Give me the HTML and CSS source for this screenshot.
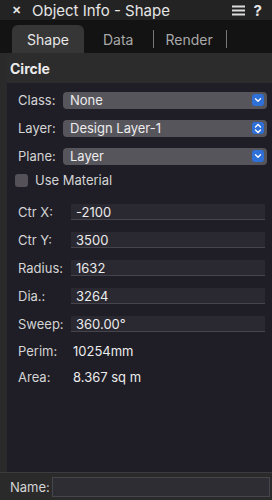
FILE: index.html
```html
<!DOCTYPE html>
<html lang="en">
<head>
<meta charset="UTF-8">
<meta name="viewport" content="width=device-width, initial-scale=1.0">
<title>Object Info - Shape</title>
<link rel="stylesheet" href="styles.css">
</head>
<body>

<div class="palette">
  <div class="titlebar">
    <span class="close">&#x2715;</span>
    <span class="title">Object Info - Shape</span>
    <span class="tools">
      <svg class="menu-icon" width="13" height="11" viewBox="0 0 13 11"><rect x="0" y="0.5" width="13" height="2" fill="#ddd"/><rect x="0" y="4.5" width="13" height="2" fill="#ddd"/><rect x="0" y="8.5" width="13" height="2" fill="#ddd"/></svg>
      <span class="help">?</span>
    </span>
  </div>

  <div class="tabs">
    <div class="tab active">Shape</div>
    <div class="tab data">Data</div>
    <div class="sep"></div>
    <div class="tab render">Render</div>
    <div class="sep"></div>
  </div>

  <div class="body">
    <div class="gutter"></div>
    <div class="content">
      <div class="heading">Circle</div>
      <div class="props">
        <div class="row">
          <label>Class:</label>
          <div class="popup"><span>None</span><span class="arrow">
            <svg width="8" height="6" viewBox="0 0 8 6"><path d="M1.5 1.8 L4 4.2 L6.5 1.8" stroke="#fff" stroke-width="1.4" fill="none" stroke-linecap="round" stroke-linejoin="round"/></svg>
          </span></div>
        </div>
        <div class="row">
          <label>Layer:</label>
          <div class="popup"><span>Design Layer-1</span><span class="arrow">
            <svg width="8" height="11" viewBox="0 0 8 11"><path d="M1.5 4 L4 1.6 L6.5 4 M1.5 7 L4 9.4 L6.5 7" stroke="#fff" stroke-width="1.4" fill="none" stroke-linecap="round" stroke-linejoin="round"/></svg>
          </span></div>
        </div>
        <div class="row">
          <label>Plane:</label>
          <div class="popup"><span>Layer</span><span class="arrow">
            <svg width="8" height="6" viewBox="0 0 8 6"><path d="M1.5 1.8 L4 4.2 L6.5 1.8" stroke="#fff" stroke-width="1.4" fill="none" stroke-linecap="round" stroke-linejoin="round"/></svg>
          </span></div>
        </div>
        <div class="check-row">
          <span class="checkbox"></span>
          <span>Use Material</span>
        </div>

        <div class="fields">
          <div class="row field-row"><label>Ctr X:</label><div class="field">-2100</div></div>
          <div class="row field-row"><label>Ctr Y:</label><div class="field">3500</div></div>
          <div class="row field-row"><label>Radius:</label><div class="field">1632</div></div>
          <div class="row field-row"><label>Dia.:</label><div class="field">3264</div></div>
          <div class="row field-row"><label>Sweep:</label><div class="field">360.00°</div></div>
          <div class="row info-row"><label>Perim:</label><div class="value">10254mm</div></div>
          <div class="row info-row"><label>Area:</label><div class="value">8.367 sq m</div></div>
        </div>
      </div>
    </div>
  </div>

  <div class="footer">
    <label>Name:</label>
    <div class="name-field"></div>
  </div>
</div>

</body>
</html>
```

FILE: styles.css
```css
/* Object Info palette */

body {
  margin: 0;
  background: #1f1e26;
  font-family: Inter, "Liberation Sans", sans-serif;
  color: #e4e4e4;
}

.palette {
  width: 272px;
  height: 500px;
  display: flex;
  flex-direction: column;
  overflow: hidden;
}

.titlebar {
  height: 20px;
  background: #232323;
  display: flex;
  align-items: center;
  padding: 0 10px 0 12px;
  font-size: 15px;
  color: #e6e6e6;
}

.close {
  font-size: 11px;
  font-weight: bold;
  width: 20px;
}

.title {
  flex: 1;
}

.tools {
  display: flex;
  align-items: center;
  gap: 9px;
}

.help {
  font-weight: bold;
  font-size: 15px;
}

.tabs {
  height: 33px;
  background: #131313;
  display: flex;
  align-items: flex-end;
  padding-left: 12px;
  font-size: 14px;
}

.tab {
  height: 28px;
  display: flex;
  align-items: center;
  color: #a8a8a8;
}

.tab.active {
  width: 72px;
  justify-content: center;
  background: #363636;
  border-radius: 6px 6px 0 0;
  color: #e8e8e8;
}

.tab.data {
  padding: 0 20px 0 19px;
}

.tab.render {
  padding: 0 13px 0 11px;
}

.sep {
  width: 1px;
  height: 18px;
  background: #777;
  margin-bottom: 5px;
}

.body {
  flex: 1;
  display: flex;
}

.gutter {
  width: 7px;
  background: #2a2a2a;
}

.content {
  flex: 1;
  display: flex;
  flex-direction: column;
}

.heading {
  height: 30px;
  background: #2c2c2c;
  display: flex;
  align-items: center;
  padding-left: 3px;
  font-weight: bold;
  font-size: 14px;
  color: #ececec;
}

.props {
  flex: 1;
  background: #1f1e26;
  padding: 3px 5px 0 11px;
  font-size: 13px;
}

.row {
  height: 28px;
  display: flex;
  align-items: center;
}

.row label {
  width: 45px;
  color: #d4d4d4;
}

.popup {
  flex: 1;
  height: 17px;
  background: #57555c;
  border-radius: 4px;
  display: flex;
  align-items: center;
  justify-content: space-between;
  padding: 0 3px 0 7px;
  color: #ececec;
}

.arrow {
  width: 12px;
  height: 12px;
  background: #2f6fd8;
  border-radius: 3px;
  display: flex;
  align-items: center;
  justify-content: center;
}

.check-row {
  height: 20px;
  display: flex;
  align-items: center;
  gap: 7px;
  margin-left: -3px;
  color: #d4d4d4;
}

.checkbox {
  width: 13px;
  height: 13px;
  border-radius: 3px;
  background: #545258;
}

.fields {
  margin-top: 8px;
}

.field-row label {
  width: 53px;
}

.field {
  flex: 1;
  height: 15px;
  background: #2a2830;
  border-bottom: 1px solid #45434b;
  display: flex;
  align-items: center;
  padding-left: 5px;
  margin-right: 2px;
  color: #ececec;
}

.info-row {
  height: 26px;
}

.info-row label {
  width: 55px;
}

.value {
  color: #ececec;
}

.footer {
  height: 27px;
  border-top: 1px solid #3c3b40;
  background: #2a2a2a;
  display: flex;
  align-items: center;
  padding: 0 2px 0 10px;
  font-size: 13px;
  color: #d4d4d4;
}

.footer label {
  width: 42px;
}

.name-field {
  flex: 1;
  height: 20px;
  background: #2e2d33;
  border: 1px solid #46454b;
  box-sizing: border-box;
}
```
